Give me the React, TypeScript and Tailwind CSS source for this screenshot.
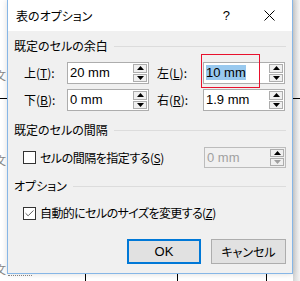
import { Check } from "lucide-react";

const jp = "font-['Noto_Sans_CJK_JP',sans-serif] [font-feature-settings:'palt']";

const Tri = ({ up, dim }: { up?: boolean; dim?: boolean }) => (
  <svg width="7" height="4" viewBox="0 0 7 4">
    <path d={up ? "M0 4 L3.5 0 L7 4 Z" : "M0 0 L3.5 4 L7 0 Z"} fill={dim ? "#a0a0a0" : "#000"} />
  </svg>
);

const Spinner = ({ disabled }: { disabled?: boolean }) => (
  <div className="flex h-full w-[16px] flex-col gap-px p-px">
    <div className="flex flex-1 items-center justify-center border border-[#adadad] bg-[#f0f0f0]">
      <Tri up />
    </div>
    <div className="flex flex-1 items-center justify-center border border-[#adadad] bg-[#f0f0f0]">
      <Tri dim={disabled} />
    </div>
  </div>
);

const NumInput = ({ value, selected }: { value: string; selected?: boolean }) => (
  <div className="flex h-[22px] w-[82px] shrink-0 items-center border border-[#adadad] bg-white">
    <div className="flex-1 pl-[2px] font-['Liberation_Sans',sans-serif] text-[13px] leading-[18px] text-black">
      <span className={selected ? "bg-[#99c9ef]" : ""}>{value}</span>
    </div>
    <Spinner />
  </div>
);

const Label = ({ pre, key1, w }: { pre: string; key1: string; w: string }) => (
  <div className={`${w} shrink-0 text-[12px] text-black`}>
    {pre}(<span className="underline">{key1}</span>):
  </div>
);

const Header = ({ text }: { text: string }) => (
  <div className="flex h-[16px] shrink-0 items-center gap-[6px]">
    <span className="text-[12px] leading-[16px] text-black">{text}</span>
    <div className="h-px flex-1 bg-[#dcdcdc]" />
  </div>
);

const Box = ({ checked }: { checked?: boolean }) => (
  <div className="flex h-[13px] w-[13px] items-center justify-center border border-[#333] bg-white">
    {checked && <Check size={11} strokeWidth={1.6} className="text-[#222]" />}
  </div>
);

export default function App() {
  return (
    <div className={`relative h-[281px] w-[300px] overflow-hidden bg-white ${jp}`}>
      {/* document behind the dialog */}
      <div className="absolute left-0 top-[98px] h-px w-[7px] bg-black" />
      <div className="absolute right-0 top-0 h-full w-[7px] bg-gradient-to-r from-[#d4d4d4] to-[#f4f4f4]" />
      <div className="absolute right-0 top-[98px] h-px w-[7px] bg-black" />
      <div className="absolute left-0 top-[68px] w-[6px] overflow-hidden text-[11px] leading-[14px] text-[#888]">
        <span className="-ml-[5px] block">文</span>
      </div>
      <div className="absolute left-0 top-[153px] w-[6px] overflow-hidden text-[11px] leading-[14px] text-[#888]">
        <span className="-ml-[5px] block">文</span>
      </div>
      <div className="absolute left-0 top-[262px] w-[6px] overflow-hidden text-[11px] leading-[14px] text-[#888]">
        <span className="-ml-[5px] block">文</span>
      </div>
      <div className="absolute left-[8px] top-[275px] w-[24px] border-t border-dotted border-[#888]" />
      <div className="absolute left-[85px] top-[274px] h-[7px] w-px bg-black" />
      <div className="absolute left-[177px] top-[274px] h-[7px] w-px bg-black" />
      <div className="absolute left-[266px] top-[274px] h-[7px] w-px bg-black" />

      {/* dialog */}
      <div className="relative ml-[7px] flex h-[274px] w-[286px] flex-col border-x border-b border-[#86b6e6] bg-[#f0f0f0] shadow-[0_0_6px_rgba(0,0,0,0.15)]">
        <div className="flex h-[31px] shrink-0 items-center bg-white pl-[8px]">
          <span className="flex-1 text-[12px] text-black">表のオプション</span>
          <span className="mr-[34px] font-['Liberation_Sans',sans-serif] text-[13px] text-black">?</span>
          <svg width="11" height="11" viewBox="0 0 11 11" className="mr-[17px]">
            <path d="M0.5 0.5 L10.5 10.5 M10.5 0.5 L0.5 10.5" stroke="#000" strokeWidth="1" />
          </svg>
        </div>

        <div className="flex h-[242px] shrink-0 flex-col px-[6px] pt-[7px]">
          <Header text="既定のセルの余白" />
          <div className="mt-[8px] flex h-[22px] shrink-0 items-center">
            <div className="ml-[10px] flex items-center">
              <Label pre="上" key1="T" w="w-[43px]" />
              <NumInput value="20 mm" />
            </div>
            <div className="ml-[8px] flex items-center">
              <Label pre="左" key1="L" w="w-[46px]" />
              <NumInput value="10 mm" selected />
            </div>
          </div>
          <div className="mt-[5px] flex h-[22px] shrink-0 items-center">
            <div className="ml-[10px] flex items-center">
              <Label pre="下" key1="B" w="w-[43px]" />
              <NumInput value="0 mm" />
            </div>
            <div className="ml-[8px] flex items-center">
              <Label pre="右" key1="R" w="w-[46px]" />
              <NumInput value="1.9 mm" />
            </div>
          </div>

          <div className="mt-[11px] shrink-0">
            <Header text="既定のセルの間隔" />
          </div>
          <div className="mt-[9px] flex h-[21px] shrink-0 items-center">
            <div className="ml-[9px]">
              <Box />
            </div>
            <span className="ml-[4px] flex-1 text-[12px] tracking-[-0.5px] text-black">
              セルの間隔を指定する(<span className="underline">S</span>)
            </span>
            <div className="flex h-[21px] w-[82px] items-center border border-[#bcbcbc] bg-[#f0f0f0]">
              <div className="flex-1 pl-[2px] font-['Liberation_Sans',sans-serif] text-[13px] text-[#a0a0a0]">0 mm</div>
              <Spinner disabled />
            </div>
          </div>

          <div className="mt-[10px] shrink-0">
            <Header text="オプション" />
          </div>
          <div className="mt-[11px] flex h-[16px] shrink-0 items-center">
            <div className="ml-[9px]">
              <Box checked />
            </div>
            <span className="ml-[4px] text-[12px] tracking-[-0.6px] text-black">
              自動的にセルのサイズを変更する(<span className="underline">Z</span>)
            </span>
          </div>

          <div className="mt-[18px] flex h-[25px] shrink-0 justify-end gap-[10px]">
            <button className="h-[25px] w-[74px] border-2 border-[#0078d7] bg-[#e1e1e1] font-['Liberation_Sans',sans-serif] text-[13px] text-black">
              OK
            </button>
            <button className="h-[25px] w-[75px] border border-[#adadad] bg-[#e1e1e1] text-[12px] text-black">
              キャンセル
            </button>
          </div>
        </div>

        <div className="absolute left-[193px] top-[54px] h-[34px] w-[59px] border border-[#e8112d]" />
      </div>
    </div>
  );
}
